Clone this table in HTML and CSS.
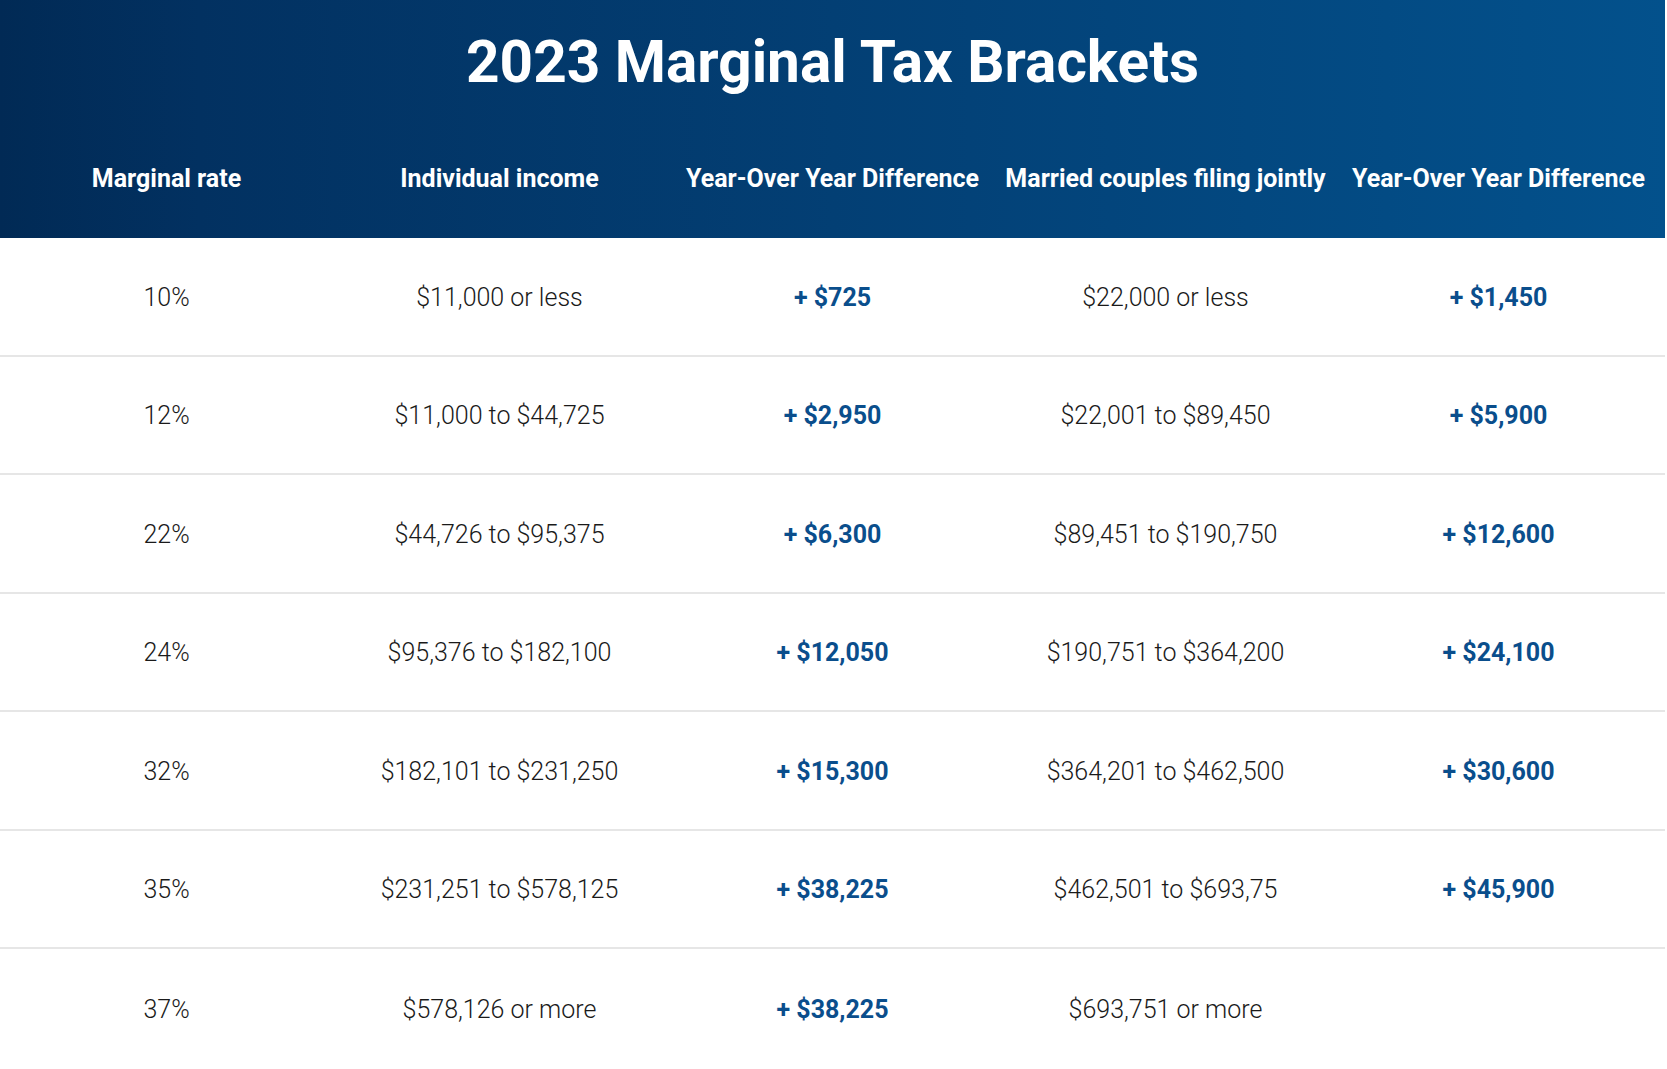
FILE: index.html
```html
<!DOCTYPE html>
<html lang="en">
<head>
<meta charset="utf-8">
<title>2023 Marginal Tax Brackets</title>
<link rel="stylesheet" href="styles.css">
</head>
<body>
<div class="table">
  <div class="head">
    <h1 class="title">2023 Marginal Tax Brackets</h1>
    <div class="labels">
      <div class="label">Marginal rate</div>
      <div class="label">Individual income</div>
      <div class="label">Year-Over Year Difference</div>
      <div class="label">Married couples filing jointly</div>
      <div class="label">Year-Over Year Difference</div>
    </div>
  </div>
  <div class="row">
    <div class="cell">10%</div>
    <div class="cell">$11,000 or less</div>
    <div class="cell diff">+ $725</div>
    <div class="cell">$22,000 or less</div>
    <div class="cell diff">+ $1,450</div>
  </div>
  <div class="row">
    <div class="cell">12%</div>
    <div class="cell">$11,000 to $44,725</div>
    <div class="cell diff">+ $2,950</div>
    <div class="cell">$22,001 to $89,450</div>
    <div class="cell diff">+ $5,900</div>
  </div>
  <div class="row">
    <div class="cell">22%</div>
    <div class="cell">$44,726 to $95,375</div>
    <div class="cell diff">+ $6,300</div>
    <div class="cell">$89,451 to $190,750</div>
    <div class="cell diff">+ $12,600</div>
  </div>
  <div class="row">
    <div class="cell">24%</div>
    <div class="cell">$95,376 to $182,100</div>
    <div class="cell diff">+ $12,050</div>
    <div class="cell">$190,751 to $364,200</div>
    <div class="cell diff">+ $24,100</div>
  </div>
  <div class="row">
    <div class="cell">32%</div>
    <div class="cell">$182,101 to $231,250</div>
    <div class="cell diff">+ $15,300</div>
    <div class="cell">$364,201 to $462,500</div>
    <div class="cell diff">+ $30,600</div>
  </div>
  <div class="row">
    <div class="cell">35%</div>
    <div class="cell">$231,251 to $578,125</div>
    <div class="cell diff">+ $38,225</div>
    <div class="cell">$462,501 to $693,75</div>
    <div class="cell diff">+ $45,900</div>
  </div>
  <div class="row last">
    <div class="cell">37%</div>
    <div class="cell">$578,126 or more</div>
    <div class="cell diff">+ $38,225</div>
    <div class="cell">$693,751 or more</div>
    <div class="cell diff"></div>
  </div>
</div>
</body>
</html>
```
FILE: styles.css
```css
html, body {
  margin: 0;
  padding: 0;
  background: #ffffff;
}

body {
  font-family: Roboto, "Liberation Sans", Arial, sans-serif;
}

.table {
  width: 1665px;
}

.head {
  height: 238px;
  box-sizing: border-box;
  padding-top: 28px;
  background: linear-gradient(90deg, #012a55 0%, #023161 12%, #033f74 50%, #03518c 100%);
  color: #ffffff;
}

.title {
  margin: 0;
  font-size: 58.5px;
  line-height: 68px;
  font-weight: 700;
  text-align: center;
}

.labels {
  display: grid;
  grid-template-columns: repeat(5, 1fr);
  padding-top: 69px;
}

.label {
  text-align: center;
  font-size: 25px;
  line-height: 28px;
  font-weight: 700;
  white-space: nowrap;
}

.row {
  display: grid;
  grid-template-columns: repeat(5, 1fr);
  align-items: center;
  height: 118.5px;
  box-sizing: border-box;
  padding-top: 3px;
  border-bottom: 2px solid #e6e6e6;
}

.row.last {
  border-bottom: none;
  height: 118px;
}

.cell {
  text-align: center;
  font-size: 25px;
  line-height: 28px;
  font-weight: 300;
  color: #1a1a1a;
}

.cell.diff {
  font-weight: 700;
  color: #0a4e8c;
}
```
